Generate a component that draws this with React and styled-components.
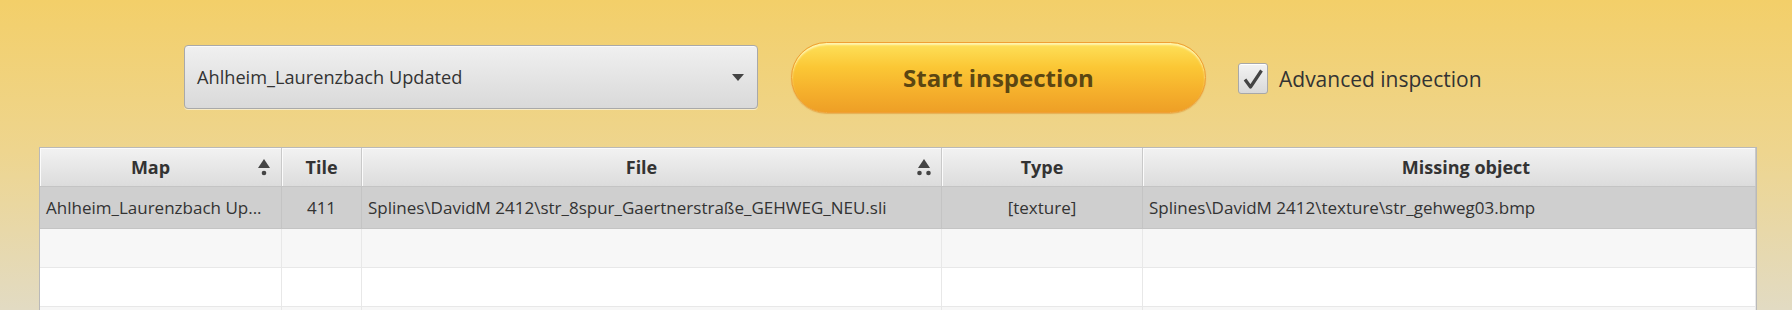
import React, { useState } from "react";
import styled, { createGlobalStyle } from "styled-components";

const GlobalStyle = createGlobalStyle`
    html, body {
        margin: 0;
        padding: 0;
        background: #e2dbc3;
    }
    * {
        box-sizing: border-box;
    }
`;

const Page = styled.div`
    min-height: 310px;
    overflow: hidden;
    font-family: "Open Sans", "Noto Sans", sans-serif;
    color: #333333;
    background: linear-gradient(180deg, #f3cf69 0px, #eed58e 150px, #e2dbc3 310px);
`;

const Toolbar = styled.div`
    display: flex;
    align-items: center;
    height: 147px;
    padding: 7px 0 0 184px;
`;

const Combo = styled.div`
    display: flex;
    align-items: center;
    justify-content: space-between;
    width: 574px;
    height: 64px;
    padding: 0 13px 0 12px;
    border: 1px solid #a9a9a9;
    border-radius: 4px;
    background: linear-gradient(180deg, #f0f0f0 0%, #d9d9d9 100%);
    box-shadow: inset 0 1px 0 #fafafa, 0 1px 0 rgba(255, 255, 255, 0.55);
    font-size: 18.2px;
    color: #333;
`;

const ComboArrow = styled.span`
    width: 0;
    height: 0;
    border-left: 6px solid transparent;
    border-right: 6px solid transparent;
    border-top: 7px solid #444;
`;

const StartButton = styled.button`
    margin-left: 33px;
    width: 415px;
    height: 71px;
    border: 1px solid #f0a035;
    border-radius: 36px;
    background: linear-gradient(180deg, #fee15a 0%, #fbc735 35%, #f5b02c 70%, #ee9f26 100%);
    box-shadow: inset 0 2px 2px rgba(255, 250, 200, 0.8), 0 1px 1px rgba(220, 140, 30, 0.5);
    font-family: "Open Sans", "Noto Sans", sans-serif;
    font-weight: 700;
    font-size: 24px;
    color: #5b4612;
    cursor: pointer;
`;

const CheckLabel = styled.label`
    display: flex;
    align-items: center;
    gap: 11px;
    margin-left: 32px;
    margin-top: 3px;
    font-size: 21px;
    color: #333;
`;

const CheckBox = styled.span`
    display: flex;
    align-items: center;
    justify-content: center;
    width: 30px;
    height: 31px;
    border: 1px solid #a8a8a8;
    border-radius: 3px;
    background: linear-gradient(180deg, #f3f3f3 0%, #d9d9d9 100%);
    box-shadow: inset 0 1px 0 #ffffff;
`;

const Table = styled.div`
    margin-left: 39px;
    width: 1718px;
    border: 1px solid #b9b9b9;
    background: #ffffff;
`;

const Row = styled.div`
    display: grid;
    grid-template-columns: 242px 80px 580px 201px 1fr;
    height: ${(p) => p.$height}px;
    background: ${(p) => p.$bg};
    border-bottom: 1px solid ${(p) => p.$line};
`;

const HeadCell = styled.div`
    display: flex;
    align-items: center;
    justify-content: center;
    position: relative;
    padding-left: ${(p) => p.$shift || 0}px;
    padding-right: ${(p) => (p.$sort ? 20 : 0)}px;
    background: linear-gradient(180deg, #f2f2f2 0%, #dcdcdc 100%);
    border-right: 1px solid #c9c9c9;
    box-shadow: inset 1px 1px 0 #fbfbfb;
    font-weight: 700;
    font-size: 18px;
    color: #333;
`;

const SortMark = styled.svg`
    position: absolute;
    right: 9px;
    top: 10px;
`;

const Cell = styled.div`
    display: flex;
    align-items: center;
    justify-content: ${(p) => (p.$center ? "center" : "flex-start")};
    padding: 0 6px;
    border-right: 1px solid ${(p) => p.$line};
    font-size: 17px;
    color: #333;
    white-space: nowrap;
    overflow: hidden;
`;

const columns = [
    { key: "map", title: "Map", sort: 1 },
    { key: "tile", title: "Tile" },
    { key: "file", title: "File", sort: 2 },
    { key: "type", title: "Type" },
    { key: "missing", title: "Missing object", shift: 34 },
];

const rows = [
    {
        map: "Ahlheim_Laurenzbach Up...",
        tile: "411",
        file: "Splines\\DavidM 2412\\str_8spur_Gaertnerstraße_GEHWEG_NEU.sli",
        type: "[texture]",
        missing: "Splines\\DavidM 2412\\texture\\str_gehweg03.bmp",
    },
];

const SortIcon = ({ dots }) => (
    <SortMark width="16" height="20" viewBox="0 0 16 20">
        <polygon points="8,1 14,10 2,10" fill="#444" />
        {dots === 1 ? (
            <circle cx="8" cy="15" r="2.3" fill="#444" />
        ) : (
            <>
                <circle cx="3.5" cy="15" r="2.3" fill="#444" />
                <circle cx="12.5" cy="15" r="2.3" fill="#444" />
            </>
        )}
    </SortMark>
);

const App = () => {
    const [advanced, setAdvanced] = useState(true);

    return (
        <Page>
            <GlobalStyle />
            <Toolbar>
                <Combo>
                    <span>Ahlheim_Laurenzbach Updated</span>
                    <ComboArrow />
                </Combo>
                <StartButton>Start inspection</StartButton>
                <CheckLabel onClick={() => setAdvanced(!advanced)}>
                    <CheckBox>
                        {advanced && (
                            <svg width="22" height="22" viewBox="0 0 22 22">
                                <path
                                    d="M3 11.5 L8.5 19 L19.5 2.5"
                                    fill="none"
                                    stroke="#444"
                                    strokeWidth="3.2"
                                    strokeLinejoin="round"
                                />
                            </svg>
                        )}
                    </CheckBox>
                    Advanced inspection
                </CheckLabel>
            </Toolbar>
            <Table>
                <Row $height={39} $bg="#e4e4e4" $line="#c4c4c4">
                    {columns.map((c) => (
                        <HeadCell key={c.key} $sort={c.sort} $shift={c.shift}>
                            {c.title}
                            {c.sort && <SortIcon dots={c.sort} />}
                        </HeadCell>
                    ))}
                </Row>
                {rows.map((r, i) => (
                    <Row key={i} $height={42} $bg="#cfcfcf" $line="#c4c4c4">
                        <Cell $line="#c4c4c4">{r.map}</Cell>
                        <Cell $line="#c4c4c4" $center>{r.tile}</Cell>
                        <Cell $line="#c4c4c4">{r.file}</Cell>
                        <Cell $line="#c4c4c4" $center>{r.type}</Cell>
                        <Cell $line="#c4c4c4">{r.missing}</Cell>
                    </Row>
                ))}
                {["#f7f7f7", "#ffffff", "#f7f7f7"].map((bg, i) => (
                    <Row key={"e" + i} $height={39} $bg={bg} $line="#e8e8e8">
                        {columns.map((c) => (
                            <Cell key={c.key} $line="#e8e8e8" />
                        ))}
                    </Row>
                ))}
            </Table>
        </Page>
    );
};

export default App;
